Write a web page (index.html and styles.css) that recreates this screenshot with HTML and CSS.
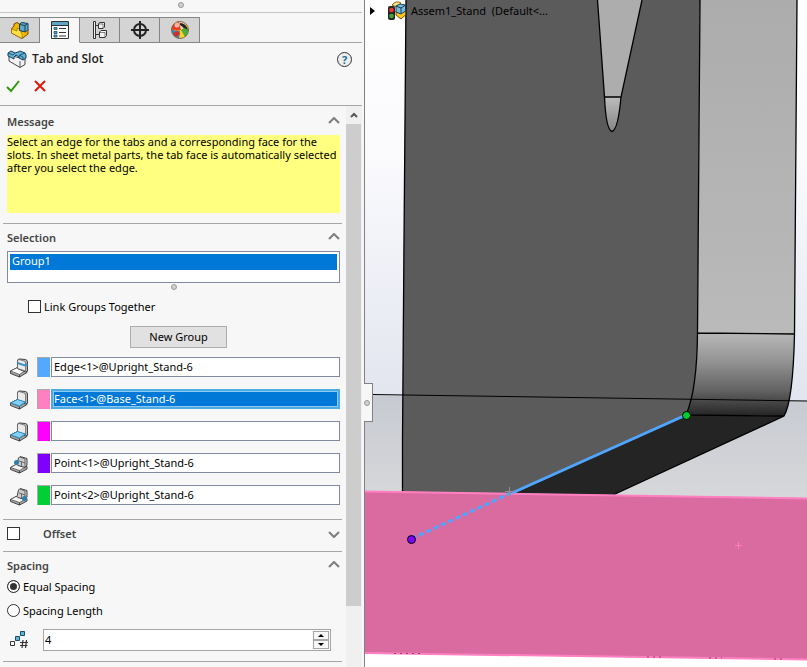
FILE: index.html
```html
<!DOCTYPE html>
<html lang="en">
<head>
<meta charset="utf-8">
<title>Tab and Slot</title>
<link rel="stylesheet" href="styles.css">
</head>
<body>
<svg class="defs" aria-hidden="true">
  <defs>
    <g id="bracket" stroke="#444" stroke-linejoin="round">
      <path d="M1.500 15 8.500 11.500 18 14V16.500L10.500 21 1.500 17.500Z" fill="#a8a8a8"/>
      <path d="M1.500 15 8.500 11.500 17 14 10.500 18.500Z" fill="#fff" stroke-width=".7"/>
      <path d="M8.500 5Q8.500 3 10.500 3L16.500 3.500Q18.500 4 18.500 6V15L16.500 16 8.500 12.500Z" fill="#b8b8b8"/>
      <path d="M8.500 5Q8.500 3.500 10 3.500L15 5Q16.500 5 16.500 7V15L8.500 12.500Z" fill="#ebebeb" stroke-width=".6"/>
      <path d="M10.500 18.500V21" fill="none"/>
    </g>
    <g id="smallbracket" stroke="#444" stroke-linejoin="round">
      <path d="M1.500 15.500 7 12.500 18 14.500V17L10.500 21 1.500 17.500Z" fill="#a8a8a8"/>
      <path d="M1.500 15.500 7 12.500 16.500 15 10.500 18.500Z" fill="#f4f4f4" stroke-width=".7"/>
      <path d="M8 12.500 9.500 6 11 4.500 18 6.500V13L16 15.500 9 13.500Z" fill="#ccc"/>
      <path d="M11 5 16 7V15M10 9 16 11M12.500 9.500V14" fill="none" stroke-width=".7"/>
      <path d="M10.500 18.500V21" fill="none"/>
    </g>
    <path id="chevron" d="M1 6 6 1 11 6" fill="none" stroke="#7d7d7d" stroke-width="2"/>
  </defs>
</svg>
<div class="app">
  <aside class="panel">
    <div class="grip-row"><span class="grip"></span></div>
    <nav class="tabs" aria-label="Manager tabs">
      <button class="tab" aria-label="Feature tree"><svg width="20" height="20" viewBox="0 0 20 20"><path d="M1.500 9 4 6V4L7 2.500 9.500 4V8L12 11 18 9V14L12 18.500 1.500 13Z" fill="#f5b800" stroke="#6d4b00"/><path d="M1.500 9 7 11V8L11 10V13L12 14V18.500L1.500 13Z" fill="#ffdf45" stroke="#8d6500" stroke-width=".6"/><path d="M9.500 4 12 2.500 18 3.500V9.500L15.500 12 9.500 10.500Z" fill="#62a7c8" stroke="#173f58"/><path d="M9.500 4.500 15 5.500V12M15 5.500 18 3.500" fill="none" stroke="#173f58"/></svg></button>
      <button class="tab active" aria-label="Property manager"><svg width="20" height="20" viewBox="0 0 20 20"><path d="M1.500 1.500H18.500V18.500H1.500Z" fill="#fff" stroke="#333"/><path d="M2 2H18V5H2Z" fill="#5ea6c7"/><path d="M2 5.500H18" stroke="#333"/><path d="M4 7.500H7V9.500H4ZM4 11.500H7V13.500H4ZM4 15H7V17H4Z" fill="#5ea6c7" stroke="#15506e" stroke-width=".8"/><path d="M9 8.500H16M9 12.500H16M9 16H16" stroke="#333"/></svg></button>
      <button class="tab" aria-label="Configurations"><svg width="20" height="20" viewBox="0 0 20 20" fill="#f3f3f3" stroke="#333"><path d="M3.500 1.500H5.500V18.500H3.500Z"/><path d="M6 5.500H9M6 14.500H9" fill="none"/><path d="M8.500 3.500 10 2.500H14.500V7L13 8.500H8.500ZM9.500 12 11 10.500H16.500V15.500L15 17.500H9.500Z"/><path d="M8.500 4H13V8.500M9.500 12.500H15V17.500" fill="none" stroke-width=".6"/></svg></button>
      <button class="tab" aria-label="Dimensions"><svg width="20" height="20" viewBox="0 0 20 20" fill="none" stroke="#222" stroke-width="2"><circle cx="10" cy="10" r="6"/><path d="M10 1V19M1 10H19"/></svg></button>
      <button class="tab" aria-label="Display"><svg width="20" height="20" viewBox="0 0 20 20"><circle cx="10" cy="10" r="8.500" fill="#ffcf23"/><path d="M1.500 9Q5 12 10 11L9 18.500Q2 17 1.500 9Z" fill="#2587d7"/><path d="M2 7Q4 2 9 1.500L11 10Q5 12 1.500 9Z" fill="#e44128"/><path d="M9 1.500Q13 1 16 4L14 8 11 10Q11 5 9 1.500Z" fill="#e9d4cb"/><path d="M10 3Q16 3 18 10L15 11Q14 7 10 5Z" fill="#242424"/><path d="M11 10 14 8 18.500 10Q18 14 15 17Z" fill="#4caf3d"/><path d="M3 13 8 11 10 14 6 17Z" fill="#d92920"/><circle cx="10" cy="10" r="8.500" fill="none" stroke="#6b5236" stroke-width=".8"/><circle cx="7" cy="5" r="2.500" fill="#fff" opacity=".6"/></svg></button>
    </nav>
    <header class="command">
      <div class="title-row">
        <svg width="20" height="20" viewBox="0 0 20 20"><path d="M2 6V12L13 18.500 18 15.500V8L13 9Z" fill="#f2f2f2" stroke="#444"/><path d="M1 4 4 2 8 4 11 3 13 2 18 4 19 6V9L16 11 12 9V8L9 6 7 8V10L1 7Z" fill="#62b4d9" stroke="#173f58"/><path d="M1 4 6 6 8 4M12 8 13 6 18 4M12 6 16 8V11M13 12V18" fill="none" stroke="#173f58" stroke-width=".8"/></svg>
        <h1>Tab and Slot</h1>
        <button class="help" aria-label="Help">?</button>
      </div>
      <div class="actions">
        <button aria-label="OK"><svg width="15" height="14" viewBox="0 0 15 14"><path d="M1 8 5 12 13 2" fill="none" stroke="#2e9a0b" stroke-width="2"/></svg></button>
        <button aria-label="Cancel"><svg width="12" height="12" viewBox="0 0 12 12"><path d="M1 1 11 11M11 1 1 11" stroke="#dc1a0b" stroke-width="2"/></svg></button>
      </div>
    </header>
    <div class="body">
      <div class="content">
        <section>
          <div class="section-head"><h2>Message</h2><button class="fold" aria-label="Collapse message"><svg width="12" height="8"><use href="#chevron"/></svg></button></div>
          <p class="message">Select an edge for the tabs and a corresponding face for the slots. In sheet metal parts, the tab face is automatically selected after you select the edge.</p>
        </section>
        <section class="selection">
          <div class="section-head"><h2>Selection</h2><button class="fold" aria-label="Collapse selection"><svg width="12" height="8"><use href="#chevron"/></svg></button></div>
          <ul class="groups"><li>Group1</li></ul>
          <div class="list-grip"><span class="grip"></span></div>
          <label class="link"><input type="checkbox">Link Groups Together</label>
          <button class="new-group">New Group</button>
          <div class="fields">
            <div class="field"><svg width="20" height="22"><use href="#bracket"/><path d="M8.500 7 16 9.500 18.500 8.500" fill="none" stroke="#3d93c4" stroke-width="2"/></svg><span class="swatch edge"></span><input aria-label="Edge" value="Edge&lt;1&gt;@Upright_Stand-6"></div>
            <div class="field"><svg width="20" height="22"><use href="#bracket"/><path d="M1.500 15 8.500 11.500 16.500 14 10.500 18Z" fill="#83cff5" stroke="#2888b5"/></svg><span class="swatch face"></span><input class="selected" aria-label="Face" value="Face&lt;1&gt;@Base_Stand-6"></div>
            <div class="field"><svg width="20" height="22"><use href="#bracket"/><path d="M1.500 15 8.500 11.500 16.500 14 10.500 18Z" fill="#83cff5" stroke="#2888b5"/></svg><span class="swatch second"></span><input aria-label="Second face"></div>
            <div class="field"><svg width="20" height="22"><use href="#smallbracket"/><circle cx="7.500" cy="10.500" r="2.500" fill="#317fa8"/></svg><span class="swatch start"></span><input aria-label="Start point" value="Point&lt;1&gt;@Upright_Stand-6"></div>
            <div class="field"><svg width="20" height="22"><use href="#smallbracket"/><circle cx="15.500" cy="14.500" r="2.500" fill="#317fa8"/></svg><span class="swatch end"></span><input aria-label="End point" value="Point&lt;2&gt;@Upright_Stand-6"></div>
          </div>
        </section>
        <section class="closed">
          <div class="section-head"><input type="checkbox" id="offset"><h2><label for="offset">Offset</label></h2><button class="fold down" aria-label="Expand offset"><svg width="12" height="8"><use href="#chevron"/></svg></button></div>
        </section>
        <section class="spacing">
          <div class="section-head"><h2>Spacing</h2><button class="fold" aria-label="Collapse spacing"><svg width="12" height="8"><use href="#chevron"/></svg></button></div>
          <div class="radios">
            <label><input type="radio" name="spacing" checked>Equal Spacing</label>
            <label><input type="radio" name="spacing">Spacing Length</label>
          </div>
          <div class="instances">
            <svg width="20" height="20" viewBox="0 0 20 20" fill="#fff" stroke="#333"><path d="M1.500 11.500H5.500V15.500H1.500Z"/><path d="M6.500 6.500H10.500V10.500H6.500ZM11.500 1.500H15.500V5.500H11.500Z" fill="#63b2d7" stroke="#174d69"/><path d="M14 10 13 18M17.500 10 16.500 18M11 12.500H19M11 15.500H18.500" stroke-width="1.200"/></svg>
            <div class="spin"><input aria-label="Number of instances" value="4"><span class="steps"><button aria-label="Increase"><svg width="6" height="3"><path d="M0 3 3 0 6 3Z"/></svg></button><button aria-label="Decrease"><svg width="6" height="3"><path d="M0 0H6L3 3Z"/></svg></button></span></div>
          </div>
        </section>
      </div>
      <div class="scrollbar"><button aria-label="Scroll up"><svg width="8" height="6" viewBox="0 0 8 6"><path d="M1 5 4 2 7 5" fill="none" stroke="#555" stroke-width="2"/></svg></button><div class="thumb"></div></div>
    </div>
  </aside>
  <main class="viewport">
    <svg class="scene" viewBox="365 0 442 667" preserveAspectRatio="xMinYMin slice" role="img" aria-label="Model view">
      <defs>
        <linearGradient id="sky" x1="0" y1="0" x2="0" y2="1"><stop offset="0" stop-color="#fff"/><stop offset=".4" stop-color="#fafafd"/><stop offset="1" stop-color="#e2e5ef"/></linearGradient>
        <linearGradient id="floor" x1="0" y1="0" x2="0" y2="1"><stop offset="0" stop-color="#c7cad2"/><stop offset="1" stop-color="#d7d8da"/></linearGradient>
        <linearGradient id="side" x1="0" y1="0" x2="0" y2="1"><stop offset="0" stop-color="#acacac"/><stop offset="1" stop-color="#bababa"/></linearGradient>
        <linearGradient id="bend" x1="0" y1="0" x2="0" y2="1"><stop offset="0" stop-color="#b8b8b8"/><stop offset=".35" stop-color="#929292"/><stop offset=".7" stop-color="#616161"/><stop offset="1" stop-color="#242424"/></linearGradient>
        <linearGradient id="notch" x1="0" y1="0" x2="0" y2="1"><stop offset="0" stop-color="#bdbdbd"/><stop offset="1" stop-color="#858585"/></linearGradient>
      </defs>
      <path d="M365 0H807V667H365Z" fill="#fff"/>
      <path d="M365 0H807V401L365 395Z" fill="url(#sky)"/>
      <path d="M365 395 807 401V500H365Z" fill="url(#floor)"/>
      <path d="M406 0H700L697.500 333Q697 390 686 415L512 493H403L402.500 440 404 240Z" fill="#5b5b5b"/>
      <path d="M700 0H797L794.500 334 697.500 333Z" fill="url(#side)"/>
      <path d="M697.500 333 794.500 334Q793 401 784 416L686 415Q697 390 697.500 333Z" fill="url(#bend)"/>
      <path d="M686 415 784 416 613 495H510Z" fill="#242424"/>
      <path d="M597.500 0H642L621 97 604.500 97Z" fill="#adadad"/>
      <path d="M604.500 97H621Q618 130 612 131.500 606 130 604.500 97Z" fill="url(#notch)"/>
      <g fill="none" stroke="#000" stroke-width="1.300">
        <path d="M406 0 404 240 402.500 440V491M700 0 697.500 333Q697 390 686 415M797 0 794.500 334Q793 401 784 416L613 495M697.500 333 794.500 334M686 415 784 416"/>
        <path d="M597.500 0 604.500 97Q606 130 612 131.500 618 130 621 97L642 0M604.500 97H621"/>
        <path d="M372 394.500 807 401" stroke-width="1"/>
      </g>
      <path d="M365 491 807 498V660L365 653Z" fill="#d96ba1"/>
      <path d="M365 491.500 807 498.500M365 653 807 659.500" stroke="#ff80c0" stroke-width="2"/>
      <path d="M394 653.500H421M647 657H663M709 658H722M774 659H783" stroke="#943e66" stroke-dasharray="2 4"/>
      <path d="M686 415 512 493" stroke="#4fa5ff" stroke-width="3"/>
      <path d="M511 493 411 539" stroke="#4fa5ff" stroke-width="3" stroke-dasharray="5 3"/>
      <path d="M505 491.500H514M509.500 487V496" stroke="#969087"/>
      <path d="M735 545.500H742M738.500 542V549" stroke="#ff80c0"/>
      <circle cx="686.500" cy="415.500" r="4" fill="#00cb2c" stroke="#000"/>
      <circle cx="411.500" cy="539.500" r="4" fill="#8000ff" stroke="#000"/>
    </svg>
    <div class="tree">
      <svg width="6" height="8"><path d="M0 0 5 4 0 8Z"/></svg>
      <svg width="20" height="20" viewBox="0 0 20 20"><path d="M5 4Q9-1 14 2L10 6Z" fill="#ffe18b" stroke="#8d6500"/><path d="M9 10V14L14 18 18.500 14V9Z" fill="#ffc91f" stroke="#6d4b00"/><path d="M9 5 13 3 18.500 4V10L14 13 9 11Z" fill="#7dbbd6" stroke="#173f58"/><path d="M9 5 14 7 18.500 4M14 7V12" fill="none" stroke="#173f58"/><rect x="1" y="5" width="7" height="14" rx="2" fill="#252525"/><circle cx="4.500" cy="9" r="2.300" fill="#ed3833"/><circle cx="4.500" cy="15" r="2.300" fill="#42a63e"/></svg>
      <span>Assem1_Stand&nbsp; (Default&lt;...</span>
    </div>
    <button class="splitter" aria-label="Collapse panel"><span class="grip"></span></button>
  </main>
</div>
</body>
</html>
```
FILE: styles.css
```css
* { box-sizing: border-box; }
body {
  margin: 0;
  font: 11px/13px "Noto Sans", "Open Sans", sans-serif;
  color: #000;
  background: #fff;
}
button, input { font: inherit; color: inherit; margin: 0; padding: 0; }
button { border: 0; background: none; }
svg { display: block; flex: none; }
h1, h2, p, ul { margin: 0; padding: 0; }
.defs { position: absolute; width: 0; height: 0; }
.app {
  display: grid;
  grid-template-columns: 365px 1fr;
  height: 100vh;
  min-height: 600px;
  overflow: hidden;
}
.panel {
  display: flex;
  flex-direction: column;
  min-height: 0;
  padding-right: 2px;
  background: #f7f7f7;
  border-right: 1px solid #808080;
}
.grip {
  display: block;
  width: 6px;
  height: 6px;
  border: 1px solid #999;
  border-radius: 50%;
  background: #d0d0d0;
}
.grip-row {
  display: flex;
  justify-content: center;
  align-items: center;
  height: 13px;
  flex: none;
  padding-bottom: 2px;
  border-bottom: 1px solid #c4c4c4;
}
.tabs {
  display: flex;
  flex: none;
  height: 26px;
  margin-top: 4px;
  border-bottom: 1px solid #a6a6a6;
}
.tab {
  display: flex;
  align-items: center;
  justify-content: center;
  width: 40px;
  height: 26px;
  background: #d4d4d4;
  border: 1px solid #858585;
  border-left: 0;
}
.tab.active { background: #f7f7f7; border-bottom-color: #f7f7f7; }
.command { flex: none; height: 63px; border-bottom: 1px solid #a6a6a6; }
.title-row { display: flex; align-items: center; gap: 5px; height: 32px; padding: 0 10px 0 7px; }
.title-row h1 { flex: 1; font: 600 12px/16px "Open Sans", "Noto Sans", sans-serif; color: #222; }
.help {
  width: 15px;
  height: 15px;
  border: 1px solid #333;
  border-radius: 50%;
  background: #eee;
  color: #19719d;
  font-weight: 700;
  font-size: 11px;
  line-height: 13px;
}
.actions { display: flex; align-items: center; gap: 13px; height: 22px; padding-left: 6px; }
.body { display: flex; flex: 1; min-height: 0; }
.content { flex: 1; padding: 2px 4px 0 3px; overflow: hidden; }
section { padding: 0 2px 10px 4px; border-bottom: 1px solid #a6a6a6; }
.section-head { display: flex; align-items: center; justify-content: space-between; height: 27px; padding-bottom: 1px; }
h2 { font-size: 11px; font-weight: 600; color: #444; }
.fold { width: 12px; height: 8px; }
.fold.down { transform: rotate(180deg); }
.message { min-height: 78px; background: #ffff80; }
.selection { padding-bottom: 14px; }
.groups { height: 32px; padding: 2px; list-style: none; background: #fff; border: 1px solid #828a9e; }
.groups li { height: 16px; padding-left: 2px; line-height: 14px; background: #0078d7; color: #fff; }
.list-grip { display: flex; justify-content: center; height: 13px; padding-top: 1px; }
.link { display: flex; align-items: center; gap: 3px; height: 20px; margin-left: 21px; }
input[type="checkbox"] { appearance: none; width: 13px; height: 13px; background: #fff; border: 1px solid #333; }
.new-group { display: block; width: 97px; height: 22px; margin: 10px 0 9px 123px; padding-bottom: 1px; background: #e1e1e1; border: 1px solid #adadad; }
.fields { display: grid; gap: 12px; }
.field { display: flex; align-items: center; height: 20px; padding-left: 2px; }
.swatch { width: 13px; height: 20px; margin: 0 1px 0 8px; border: 1px solid #aaa; border-width: 1px 0 0 1px; }
.edge { background: #54a8ff; }
.face { background: #ff80c0; }
.second { background: #f0f; }
.start { background: #8000ff; }
.end { background: #00cf35; }
.field input { flex: 1; min-width: 0; height: 20px; padding: 0 2px 2px; background: #fff; border: 1px solid #828a9e; }
.field input.selected { padding: 0 1px 2px; background: #0078d7; color: #fff; border: 2px solid #4bade3; box-shadow: inset 0 0 0 1px #8ec8ee; }
.closed { padding-bottom: 0; }
.closed .section-head { height: 31px; padding-bottom: 4px; }
.closed h2 { flex: 1; margin-left: 23px; }
.radios { display: grid; gap: 8px; }
.radios label { display: flex; align-items: center; gap: 3px; height: 16px; padding-bottom: 1px; }
input[type="radio"] { appearance: none; width: 13px; height: 13px; border: 1px solid #333; border-radius: 50%; background: #fff; }
input[type="radio"]:checked { background: #333; box-shadow: inset 0 0 0 2px #fff; }
.instances { display: flex; align-items: center; margin: 10px 9px 0 2px; }
.spin { display: flex; flex: 1; height: 22px; margin-left: 14px; border: 1px solid #a6a6a6; background: #fff; }
.spin input { flex: 1; min-width: 0; padding: 0 1px 1px; border: 0; background: transparent; }
.steps { display: grid; width: 18px; padding: 1px; background: #f7f7f7; }
.steps button { display: flex; align-items: center; justify-content: center; border: 1px solid #a6a6a6; }
.scrollbar { width: 16px; background: #f0f0f0; }
.scrollbar button { display: flex; align-items: center; justify-content: center; width: 15px; height: 18px; }
.thumb { width: 15px; height: 86%; background: #cdcdcd; }
.viewport { position: relative; min-width: 0; }
.scene { width: 100%; height: 100%; }
.tree { position: absolute; top: 0; left: 5px; display: flex; align-items: center; height: 21px; white-space: nowrap; }
.tree svg + svg { margin: 0 4px 0 11px; }
.splitter {
  position: absolute;
  top: 383px;
  left: -1px;
  display: flex;
  align-items: center;
  width: 9px;
  height: 39px;
  background: #f7f7f7;
  border: 1px solid #808080;
  border-left: 0;
}
```
